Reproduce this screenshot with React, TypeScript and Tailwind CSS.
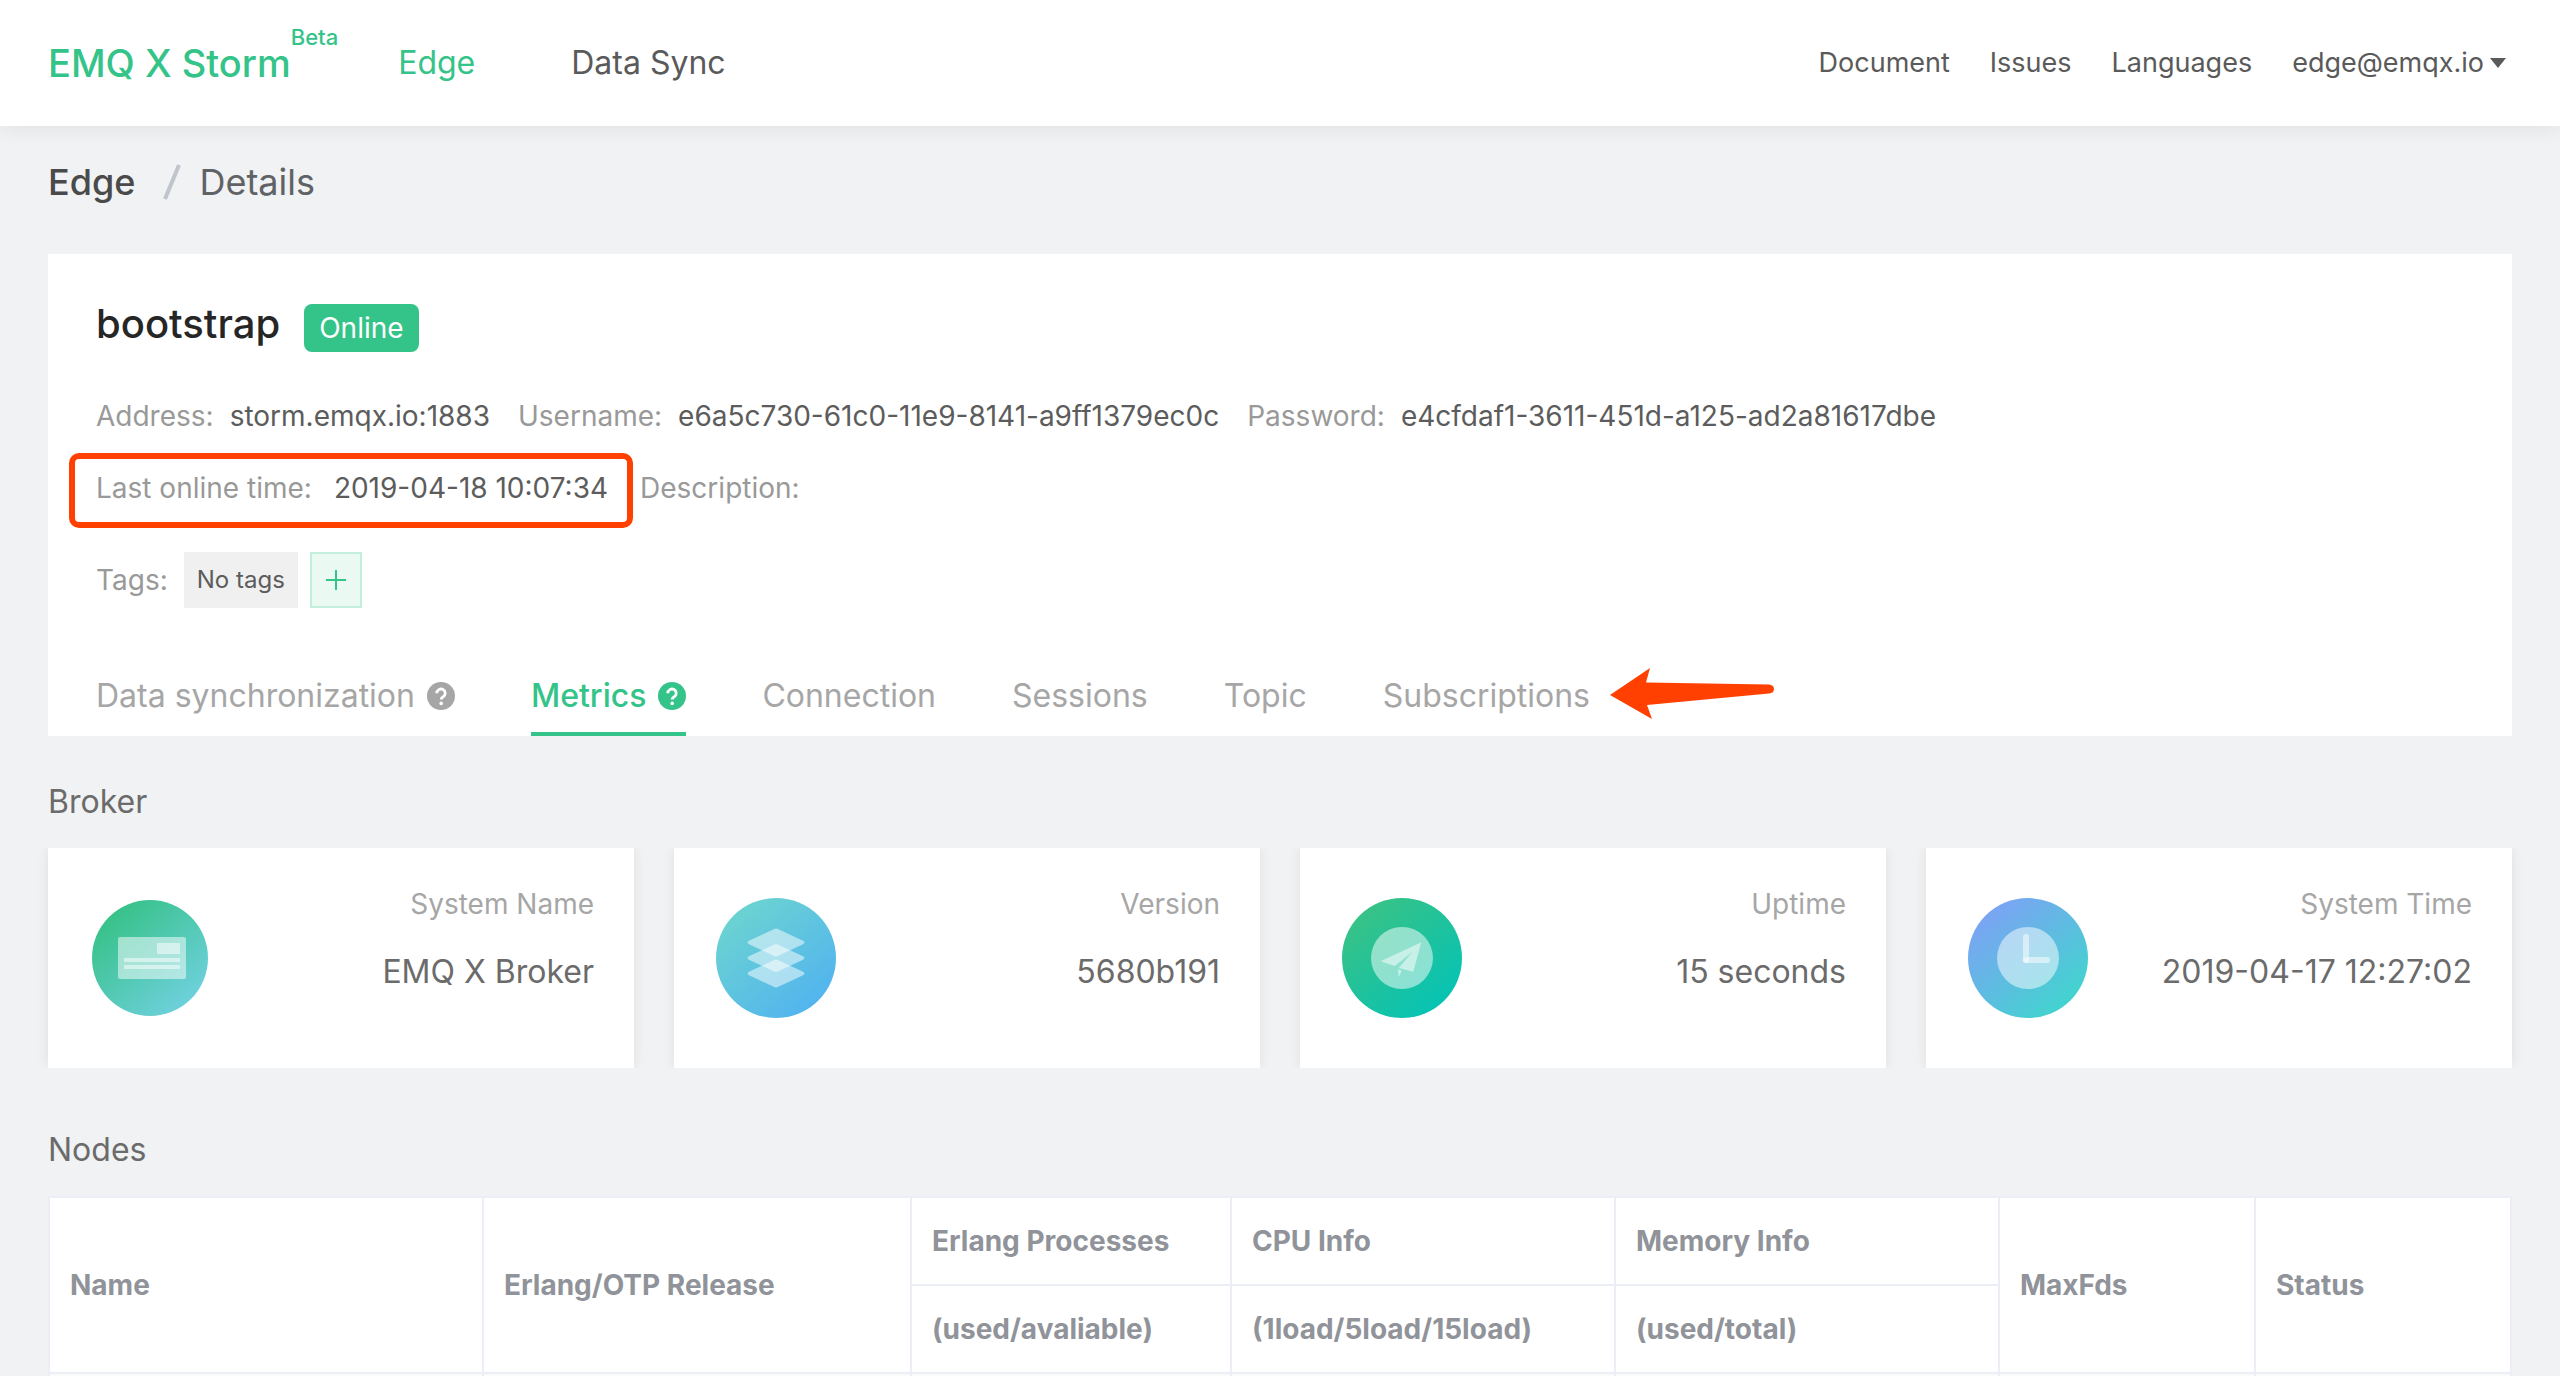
import type { ReactNode } from "react";

function HelpIcon() {
  return (
    <svg viewBox="0 0 28 28" className="size-7" aria-hidden="true">
      <circle cx="14" cy="14" r="14" fill="currentColor" />
      <path d="M9.8 11.2a4.2 4.2 0 1 1 6.4 3.6c-1.4.9-2 1.4-2 2.8" fill="none" stroke="#fff" strokeWidth="2.8" />
      <circle cx="14.2" cy="21.4" r="1.8" fill="#fff" />
    </svg>
  );
}

function Disc({ id, from, to, r = 60, children }: { id: string; from: string; to: string; r?: number; children: ReactNode }) {
  return (
    <svg viewBox="0 0 120 120" className="size-[120px] shrink-0" aria-hidden="true">
      <defs>
        <linearGradient id={id} x1="0.15" y1="0.15" x2="0.8" y2="0.9">
          <stop offset="0" stopColor={from} />
          <stop offset="1" stopColor={to} />
        </linearGradient>
      </defs>
      <circle cx="60" cy="60" r={r} fill={`url(#${id})`} />
      {children}
    </svg>
  );
}

const layer = "M57.6 1.2Q60 0 62.4 1.2L87 12.8Q90 14.5 87 16.2L62.4 27.8Q60 29 57.6 27.8L33 16.2Q30 14.5 33 12.8Z";

const stats: { label: string; value: string; icon: ReactNode }[] = [
  {
    label: "System Name",
    value: "EMQ X Broker",
    icon: (
      <Disc id="g-name" from="#38c28a" to="#6dd0db" r={58}>
        <rect x="28" y="39" width="68" height="42" rx="2" fill="#fff" fillOpacity="0.5" />
        <g fill="#fff" fillOpacity="0.5">
          <rect x="67" y="45" width="23" height="11" />
          <rect x="34" y="60" width="56" height="4" />
          <rect x="34" y="67" width="56" height="4" />
        </g>
      </Disc>
    ),
  },
  {
    label: "Version",
    value: "5680b191",
    icon: (
      <Disc id="g-version" from="#6bd2d2" to="#52b5ee">
        <g fill="#fff" fillOpacity="0.5">
          <path d={layer} transform="translate(0 30)" />
          <path d={layer} transform="translate(0 45.5)" />
          <path d={layer} transform="translate(0 61)" />
        </g>
      </Disc>
    ),
  },
  {
    label: "Uptime",
    value: "15 seconds",
    icon: (
      <Disc id="g-uptime" from="#37c287" to="#07c3b3">
        <circle cx="60" cy="60" r="31" fill="#fff" fillOpacity="0.5" />
        <g fill="#fff" fillOpacity="0.5">
          <path d="M79.3 44.3L38.7 63.3L52.7 68L70.7 53.7L56.7 70L71.3 73.7Z" />
          <path d="M56 71.3L59.7 72.7L56.7 79.3Z" />
        </g>
      </Disc>
    ),
  },
  {
    label: "System Time",
    value: "2019-04-17 12:27:02",
    icon: (
      <Disc id="g-time" from="#7aa5f3" to="#42d3cf">
        <circle cx="60" cy="60" r="31" fill="#fff" fillOpacity="0.5" />
        <g stroke="#fff" strokeOpacity="0.5" strokeWidth="6" strokeLinecap="round">
          <path d="M58 39V62" />
          <path d="M58 62H79" />
        </g>
      </Disc>
    ),
  },
];

const tabs = [
  { name: "Data synchronization", help: true },
  { name: "Metrics", help: true, active: true },
  { name: "Connection" },
  { name: "Sessions" },
  { name: "Topic" },
  { name: "Subscriptions" },
];

function Field({ label, value, gap = "gap-4" }: { label: string; value?: string; gap?: string }) {
  return (
    <div className={"flex " + gap}>
      <dt className="text-[#999999]">{label}</dt>
      {value && <dd className="text-[#5c5c5c]">{value}</dd>}
    </div>
  );
}

const th = "border-2 border-[#ebeef5] px-5 text-left";

export default function App() {
  return (
    <div className="h-screen overflow-hidden bg-[#f0f2f4] font-['Inter',sans-serif] text-[28px] leading-10 text-[#5a5a5a]">
      <header className="relative flex h-[126px] items-center justify-between bg-white px-12 shadow-[0_2px_20px_rgba(0,0,0,0.08)]">
        <div className="flex items-center">
          <a href="#home" className="flex text-[38px] font-medium text-[#34c388]">
            EMQ X Storm
            <span className="-mt-[18px] text-[22px] leading-6">Beta</span>
          </a>
          <nav className="ml-[60px] flex gap-24 text-[32px]">
            <a href="#edge" className="text-[#34c388]">Edge</a>
            <a href="#sync">Data Sync</a>
          </nav>
        </div>
        <nav className="mr-1.5 flex gap-10 text-[27px]">
          <a href="#document">Document</a>
          <a href="#issues">Issues</a>
          <a href="#languages">Languages</a>
          <button type="button" className="flex items-center gap-1.5">
            edge@emqx.io
            <svg viewBox="0 0 16 10" className="h-[10px] w-4" aria-hidden="true">
              <path d="M0 0H16L8 10Z" fill="currentColor" />
            </svg>
          </button>
        </nav>
      </header>

      <main className="px-12">
        <nav className="flex items-center gap-7 pt-7 pb-11 text-[36px] leading-[56px]">
          <a href="#edge" className="font-medium text-[#4a4a4a]">Edge</a>
          <span className="flex items-center gap-[18px]">
            <svg viewBox="0 0 18 36" className="h-9 w-[18px]" aria-hidden="true">
              <path d="M16 1L2 35" stroke="#c0c4cc" strokeWidth="4" />
            </svg>
            <span className="text-[#606266]">Details</span>
          </span>
        </nav>

        <section className="bg-white px-12 pt-[50px]">
          <div className="flex items-start gap-6">
            <h1 className="text-[40px] leading-10 font-medium text-[#262626]">bootstrap</h1>
            <span className="rounded-lg bg-[#34c388] px-[15px] leading-[48px] text-white">Online</span>
          </div>

          <dl className="mt-11 flex flex-wrap gap-x-7">
            <Field label="Address:" value="storm.emqx.io:1883" />
            <Field label="Username:" value="e6a5c730-61c0-11e9-8141-a9ff1379ec0c" />
            <Field label="Password:" value="e4cfdaf1-3611-451d-a125-ad2a81617dbe" />
          </dl>
          <dl className="mt-8 flex gap-x-8">
            <div className="relative">
              <Field label="Last online time:" value="2019-04-18 10:07:34" gap="gap-[22px]" />
              <div className="pointer-events-none absolute -top-[15px] -right-[25px] -bottom-5 -left-[27px] rounded-[10px] border-[6px] border-[#ff4000]" />
            </div>
            <Field label="Description:" />
          </dl>
          <div className="mt-11 flex items-center text-[#999999]">
            Tags:
            <span className="ml-4 bg-[#f0f0f0] px-[13px] text-[24px] leading-[56px] text-[#5c5c5c]">No tags</span>
            <button type="button" aria-label="Add tag" className="ml-3 flex h-14 w-[52px] items-center justify-center border-2 border-[#c2eedc] bg-[#ebf9f3] text-[#34c388]">
              <svg viewBox="0 0 20 20" className="size-5" aria-hidden="true">
                <path d="M10 0V20M0 10H20" stroke="currentColor" strokeWidth="2" />
              </svg>
            </button>
          </div>

          <div className="mt-16 flex items-start">
            <div role="tablist" className="flex gap-[76px] text-[32px] text-[#a6a6a6]">
              {tabs.map((t) => (
                <button
                  key={t.name}
                  type="button"
                  role="tab"
                  aria-selected={!!t.active}
                  className={
                    "flex h-16 items-start gap-3 border-b-4 pt-1 " +
                    (t.active ? "border-[#34c388] font-medium text-[#34c388]" : "border-transparent")
                  }
                >
                  {t.name}
                  {t.help && <span className="flex h-10 items-center"><HelpIcon /></span>}
                </button>
              ))}
            </div>
            <svg viewBox="0 0 166 52" className="-mt-1 ml-5 h-[52px] w-[166px]" aria-hidden="true">
              <path d="M0 27L40 0L36 14.500L159 16.500Q164 17 164 21Q164 25 159 25.500L37 37L42 51Z" fill="#ff4000" />
            </svg>
          </div>
        </section>

        <h2 className="mt-[46px] text-[32px] text-[#6b6b6b]">Broker</h2>
        <div className="mt-[26px] grid grid-cols-4 gap-10">
          {stats.map((s) => (
            <article
              key={s.label}
              className="flex h-[220px] items-center justify-between bg-white pr-10 pl-[42px] shadow-[0_0_12px_rgba(0,0,0,0.08)] [clip-path:inset(0_-12px)]"
            >
              {s.icon}
              <div className="flex flex-col gap-7 self-start pt-9 text-right">
                <p className="text-[#a6a6a6]">{s.label}</p>
                <p className="text-[32px] text-[#6b6b6b]">{s.value}</p>
              </div>
            </article>
          ))}
        </div>

        <h2 className="mt-[62px] text-[32px] text-[#6b6b6b]">Nodes</h2>
        <table className="mt-[26px] w-full table-fixed border-collapse bg-white font-semibold text-[#909399]">
          <colgroup>
            <col className="w-[434px]" />
            <col className="w-[428px]" />
            <col className="w-[320px]" />
            <col className="w-[384px]" />
            <col className="w-[384px]" />
            <col className="w-[256px]" />
            <col className="w-[256px]" />
          </colgroup>
          <thead>
            <tr className="h-[88px]">
              <th rowSpan={2} className={th}>Name</th>
              <th rowSpan={2} className={th}>Erlang/OTP Release</th>
              <th className={th}>Erlang Processes</th>
              <th className={th}>CPU Info</th>
              <th className={th}>Memory Info</th>
              <th rowSpan={2} className={th}>MaxFds</th>
              <th rowSpan={2} className={th}>Status</th>
            </tr>
            <tr className="h-[88px]">
              <th className={th}>(used/avaliable)</th>
              <th className={th}>(1load/5load/15load)</th>
              <th className={th}>(used/total)</th>
            </tr>
          </thead>
          <tbody>
            <tr className="h-[88px] bg-[#fafafa]">
              <td className={th} />
              <td className={th} />
              <td className={th} />
              <td className={th} />
              <td className={th} />
              <td className={th} />
              <td className={th} />
            </tr>
          </tbody>
        </table>
      </main>
    </div>
  );
}
